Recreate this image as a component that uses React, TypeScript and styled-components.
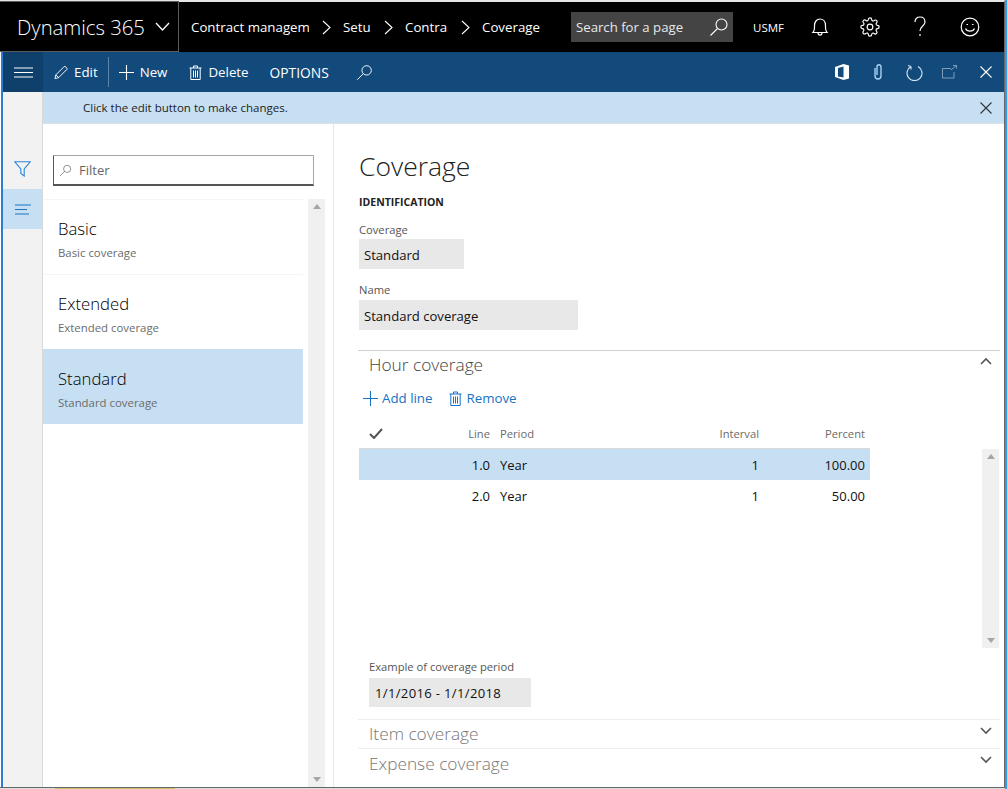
import { ReactNode } from 'react';
import styled, { createGlobalStyle } from 'styled-components';

const GlobalStyle = createGlobalStyle`
  html, body {
    margin: 0;
    padding: 0;
    background: #fff;
    overflow: hidden;
  }
  body {
    font-family: "Open Sans", "Noto Sans", sans-serif;
    color: #000;
  }
  * {
    box-sizing: border-box;
  }
`;

const Page = styled.div`
  width: 1007px;
  height: 789px;
  overflow: hidden;
  background: #3a96e8;
  display: flex;
  flex-direction: column;
`;

const Window = styled.div`
  width: 1005px;
  height: 788px;
  flex: none;
  background: #fff;
  border-top: 2px solid #e6e6e6;
  border-right: 1px solid #666;
  border-bottom: 1px solid #666;
  display: flex;
  flex-direction: column;
`;

const BehindStrip = styled.div`
  height: 1px;
  flex: none;
  width: 1005px;
  background: #dedede;
  padding-left: 55px;
`;

const BehindHighlight = styled.div`
  width: 120px;
  height: 1px;
  background: #c9c46a;
`;

const TopBar = styled.header`
  height: 50px;
  flex: none;
  background: #000;
  color: #fff;
  display: flex;
  align-items: center;
`;

const Brand = styled.div`
  width: 179px;
  height: 51px;
  margin-top: -1px;
  border: 1px solid #5c5c5c;
  border-left: 0;
  display: flex;
  align-items: center;
  padding-left: 17px;
  gap: 10px;
  font-size: 20.3px;
  font-weight: 300;
`;

const Crumbs = styled.nav`
  display: flex;
  align-items: center;
  padding-left: 12px;
  font-size: 13.3px;
  width: 392px;
`;

const Crumb = styled.span<{ $w: number }>`
  width: ${(p) => p.$w}px;
  overflow: hidden;
  white-space: nowrap;
`;

const CrumbSep = styled.span`
  width: 34px;
  display: flex;
  justify-content: center;
`;

const SearchBox = styled.div`
  width: 162px;
  height: 30px;
  background: #444;
  color: #e8e8e8;
  font-size: 13.2px;
  display: flex;
  align-items: center;
  justify-content: space-between;
  padding: 0 4px 0 5px;
`;

const Company = styled.span`
  font-size: 11.5px;
  margin-left: 20px;
  width: 42px;
`;

const TopIcons = styled.div`
  display: flex;
  align-items: center;
`;

const TopIcon = styled.div`
  width: 50px;
  display: flex;
  justify-content: center;
`;

const CommandBar = styled.div`
  height: 40px;
  flex: none;
  margin-left: 1px;
  background: #134a7c;
  color: #fff;
  border-left: 2px solid #2b7cd3;
  display: flex;
  align-items: center;
  font-size: 13.3px;
`;

const MenuButton = styled.div`
  width: 40px;
  height: 40px;
  margin-right: 11px;
  background: #0f3f6b;
  display: flex;
  align-items: center;
  justify-content: center;
`;

const Action = styled.div`
  display: flex;
  align-items: center;
  gap: 6px;
`;

const Divider = styled.div`
  width: 1px;
  height: 30px;
  background: #5f86a8;
  margin: 0 10px;
`;

const ActionGap = styled.span<{ $w: number }>`
  width: ${(p) => p.$w}px;
  flex: none;
`;

const OptionsLabel = styled.span`
  font-size: 13.8px;
`;

const RightActions = styled.div`
  margin-left: auto;
  display: flex;
  align-items: center;
`;

const RightAction = styled.div`
  width: 36px;
  display: flex;
  justify-content: center;
`;

const Body = styled.div`
  flex: 1;
  min-height: 0;
  margin-left: 1px;
  display: flex;
  border-left: 2px solid #2b7cd3;
`;

const Rail = styled.aside`
  width: 40px;
  flex: none;
  background: #f2f2f2;
  border-right: 1px solid #d8d8d8;
  padding-top: 57px;
`;

const RailButton = styled.div<{ $active?: boolean }>`
  height: 40px;
  width: 39px;
  display: flex;
  align-items: center;
  justify-content: center;
  background: ${(p) => (p.$active ? '#c7dff3' : 'transparent')};
`;

const Main = styled.div`
  flex: 1;
  min-width: 0;
  display: flex;
  flex-direction: column;
`;

const MessageBar = styled.div`
  height: 32px;
  flex: none;
  background: #c7dff3;
  border-bottom: 1px solid #d8e2ea;
  display: flex;
  align-items: center;
  justify-content: space-between;
  padding: 0 11px 0 40px;
  font-size: 11.5px;
  color: #222;
`;

const Columns = styled.div`
  flex: 1;
  min-height: 0;
  display: flex;
`;

const ListPane = styled.section`
  width: 291px;
  flex: none;
  border-right: 1px solid #e6e6e6;
  display: flex;
  flex-direction: column;
`;

const FilterBox = styled.div`
  width: 261px;
  height: 31px;
  margin: 31px 0 0 10px;
  border: 1px solid #a6a6a6;
  border-bottom: 2px solid #555;
  border-left: 1px solid #555;
  display: flex;
  align-items: center;
  gap: 7px;
  padding-left: 5px;
  font-size: 13px;
  color: #666;
`;

const ListArea = styled.div`
  flex: 1;
  min-height: 0;
  display: flex;
  margin-top: 13px;
`;

const List = styled.div`
  width: 260px;
  flex: none;
`;

const ListItem = styled.div<{ $selected?: boolean }>`
  height: 75px;
  padding: 17px 0 0 15px;
  background: ${(p) => (p.$selected ? '#c7dff3' : '#fff')};
  border-top: 1px solid ${(p) => (p.$selected ? '#c7dff3' : '#f5f5f5')};
`;

const ItemTitle = styled.div`
  font-size: 16.7px;
  line-height: 24px;
  font-weight: 300;
  color: #000;
`;

const ItemSub = styled.div`
  font-size: 11.4px;
  line-height: 17px;
  margin-top: 3px;
  color: #6b6b6b;
`;

const ScrollTrack = styled.div<{ $left: number }>`
  width: 17px;
  flex: none;
  margin-left: ${(p) => p.$left}px;
  background: #f0f0f0;
  display: flex;
  flex-direction: column;
  justify-content: space-between;
  align-items: center;
  padding: 5px 0;
`;

const ScrollArrow = styled.div<{ $down?: boolean }>`
  width: 0;
  height: 0;
  border-left: 4px solid transparent;
  border-right: 4px solid transparent;
  ${(p) => (p.$down ? 'border-top: 5px solid #a6a6a6;' : 'border-bottom: 5px solid #a6a6a6;')}
`;

const Detail = styled.section`
  flex: 1;
  min-width: 0;
  padding: 22px 4px 0 25px;
`;

const Title = styled.h1`
  margin: 0;
  font-size: 26.5px;
  line-height: 40px;
  font-weight: 300;
  color: #222;
`;

const GroupTitle = styled.h2`
  margin: 9px 0 0;
  font-size: 10.5px;
  line-height: 14px;
  font-weight: 700;
  color: #222;
`;

const FieldLabel = styled.div<{ $top: number }>`
  margin-top: ${(p) => p.$top}px;
  font-size: 11.2px;
  line-height: 15px;
  color: #555;
`;

const FieldValue = styled.div<{ $w: number; $gap?: number; $short?: boolean }>`
  width: ${(p) => p.$w}px;
  height: ${(p) => (p.$short ? 29 : 30)}px;
  margin-top: ${(p) => p.$gap ?? 2}px;
  background: #e8e8e8;
  font-size: 13.1px;
  display: flex;
  align-items: center;
  padding: 1px 0 0 5px;
  color: #111;
`;

const DateValue = styled(FieldValue)`
  padding-left: 6px;
  letter-spacing: 0.32px;
`;

const NameField = styled.div`
  margin-bottom: 20px;
`;

const Section = styled.div<{ $strong?: boolean; $h: number }>`
  height: ${(p) => p.$h}px;
  margin-left: -1px;
  border-top: 1px solid ${(p) => (p.$strong ? '#d0d0d0' : '#eeeeee')};
  padding: 0 8px ${(p) => (p.$strong ? 3 : 1)}px 11px;
  display: flex;
  align-items: center;
  justify-content: space-between;
  font-size: 17.3px;
  font-weight: 300;
  color: ${(p) => (p.$strong ? '#444' : '#777')};
`;

const SectionChevron = styled.div<{ $up?: boolean }>`
  margin-bottom: ${(p) => (p.$up ? 8 : 6)}px;
`;

const ToolRow = styled.div`
  height: 34px;
  display: flex;
  align-items: center;
  padding-left: 4px;
  gap: 4px;
  color: #1673c6;
  font-size: 13.3px;
`;

const ToolGap = styled.span`
  width: 9px;
`;

const GridHeader = styled.div`
  height: 32px;
  margin-top: 2px;
  width: 511px;
  display: grid;
  grid-template-columns: 121px 10px 1fr 80px 106px;
  align-items: center;
  font-size: 11.2px;
  color: #6b6b6b;
  padding: 2px 5px 0 10px;
  border-bottom: 1px solid #dcdcdc;
`;

const CheckCell = styled.div`
  display: flex;
  justify-content: space-between;
  align-items: center;
`;

const GridArea = styled.div`
  display: flex;
  height: 199px;
`;

const GridRows = styled.div`
  width: 511px;
  flex: none;
`;

const GridRow = styled.div<{ $selected?: boolean }>`
  height: 31px;
  display: grid;
  grid-template-columns: 121px 10px 1fr 80px 106px;
  align-items: center;
  font-size: 13px;
  color: #111;
  padding: 0 5px 0 10px;
  background: ${(p) => (p.$selected ? '#c7dff3' : '#fff')};
`;

const Num = styled.span`
  text-align: right;
`;

const Example = styled.div`
  padding: 11px 0 0 10px;
  height: 71px;
`;

const Ico = ({ w = 18, h = 18, box, color = 'currentColor', sw = 1, children }: { w?: number; h?: number; box?: string; color?: string; sw?: number; children: ReactNode }) => (
  <svg width={w} height={h} viewBox={box ?? `0 0 ${w} ${h}`} fill="none" stroke={color} strokeWidth={sw} style={{ flex: 'none', display: 'block' }}>
    {children}
  </svg>
);

const Magnifier = ({ size = 20, color = 'currentColor' }: { size?: number; color?: string }) => (
  <Ico w={size} h={size} box="0 0 20 20" color={color} sw={1.1}>
    <circle cx="12.5" cy="7.5" r="5.5" />
    <path d="M8.5 11.5L1.5 18.5" />
  </Ico>
);

const Chevron = ({ up, color = '#555' }: { up?: boolean; color?: string }) => (
  <Ico w={12} h={8} color={color} sw={1.6}>
    <path d={up ? 'M1 7L6 2L11 7' : 'M1 1L6 6L11 1'} />
  </Ico>
);

const Crossed = ({ size = 14, color = 'currentColor' }: { size?: number; color?: string }) => (
  <Ico w={size} h={size} box="0 0 14 14" color={color} sw={1.1}>
    <path d="M1.5 1.5L12.5 12.5M12.5 1.5L1.5 12.5" />
  </Ico>
);

const Plus = ({ color = 'currentColor' }: { color?: string }) => (
  <Ico w={15} h={15} color={color} sw={1.1}>
    <path d="M7.5 0V15M0 7.5H15" />
  </Ico>
);

const Trash = ({ color = 'currentColor' }: { color?: string }) => (
  <Ico w={13} h={15} color={color} sw={1}>
    <path d="M0.5 3H12.5M4.5 3V1H8.5V3M1.8 3V14.5H11.2V3M4.5 5.5V12.5M6.5 5.5V12.5M8.5 5.5V12.5" />
  </Ico>
);

const Sep = () => (
  <CrumbSep>
    <Ico w={9} h={15} color="#fff" sw={1.1}>
      <path d="M1 1L8 7.5L1 14" />
    </Ico>
  </CrumbSep>
);

function App() {
  return (
    <Page>
      <GlobalStyle />
      <Window>
        <TopBar>
          <Brand>
            Dynamics 365
            <Ico w={15} h={9} color="#fff" sw={1.3}>
              <path d="M1 1L7.5 8L14 1" />
            </Ico>
          </Brand>
          <Crumbs>
            <Crumb $w={118}>Contract managem</Crumb>
            <Sep />
            <Crumb $w={28}>Setu</Crumb>
            <Sep />
            <Crumb $w={43}>Contra</Crumb>
            <Sep />
            <Crumb $w={62}>Coverage</Crumb>
          </Crumbs>
          <SearchBox>
            Search for a page
            <Magnifier color="#fff" />
          </SearchBox>
          <Company>USMF</Company>
          <TopIcons>
            <TopIcon>
              <Ico w={18} h={20} color="#fff" sw={1.2}>
                <path d="M2 15.5C4 13.5 3.5 11 3.5 8.5C3.5 4.5 6 2 9 2C12 2 14.5 4.5 14.5 8.5C14.5 11 14 13.5 16 15.5ZM7 15.5C7 19 11 19 11 15.5" />
              </Ico>
            </TopIcon>
            <TopIcon>
              <Ico w={20} h={20} box="0 0 24 24" color="#fff" sw={1.4}>
                <circle cx="12" cy="12" r="3.4" />
                <path d="M19.4 15a1.7 1.7 0 0 0 .3 1.8l.1.1a2 2 0 1 1-2.9 2.9l-.1-.1a1.7 1.7 0 0 0-2.8 1.2V21a2 2 0 0 1-4 0v-.1a1.7 1.7 0 0 0-2.9-1.2l-.1.1a2 2 0 1 1-2.9-2.9l.1-.1a1.7 1.7 0 0 0-1.2-2.8H3a2 2 0 0 1 0-4h.1a1.7 1.7 0 0 0 1.2-2.9l-.1-.1a2 2 0 1 1 2.9-2.9l.1.1a1.7 1.7 0 0 0 1.8.3H9a1.7 1.7 0 0 0 1-1.5V3a2 2 0 0 1 4 0v.1a1.7 1.7 0 0 0 2.9 1.2l.1-.1a2 2 0 1 1 2.9 2.9l-.1.1a1.7 1.7 0 0 0-.3 1.8V9a1.7 1.7 0 0 0 1.5 1H21a2 2 0 0 1 0 4h-.1a1.7 1.7 0 0 0-1.5 1z" />
              </Ico>
            </TopIcon>
            <TopIcon>
              <Ico w={14} h={22} color="#fff" sw={1.2}>
                <path d="M2 6C2 3 4 1 7 1C10 1 12 3 12 6C12 10 7 10 7 15M7 18V20" />
              </Ico>
            </TopIcon>
            <TopIcon>
              <Ico w={20} h={20} color="#fff" sw={1.2}>
                <circle cx="10" cy="10" r="8.8" />
                <path d="M5.5 11.5C7 15 13 15 14.5 11.5M6.5 7.5H8M12 7.5H13.5" />
              </Ico>
            </TopIcon>
          </TopIcons>
        </TopBar>
        <CommandBar>
          <MenuButton>
            <Ico w={19} h={11} color="#fff" sw={1.2}>
              <path d="M0 1H19M0 5.5H19M0 10H19" />
            </Ico>
          </MenuButton>
          <Action>
            <Ico w={14} h={15} box="0 0 15 15" color="#fff" sw={1}>
              <path d="M1 14L2 10L11 1C12 0.5 14.5 3 14 4L5 13ZM2 10L5 13" />
            </Ico>
            Edit
          </Action>
          <Divider />
          <Action>
            <Plus color="#fff" />
            New
          </Action>
          <ActionGap $w={22} />
          <Action>
            <Trash color="#fff" />
            Delete
          </Action>
          <ActionGap $w={21} />
          <OptionsLabel>OPTIONS</OptionsLabel>
          <ActionGap $w={27} />
          <Magnifier size={17} color="#fff" />
          <RightActions>
            <RightAction>
              <Ico w={14} h={16} color="#fff" sw={0}>
                <path fill="#fff" d="M0 3L8.5 0L14 1.5V14.5L8.5 16L0 13ZM8.5 2.5L3 4V12.5L8.5 13.5Z" />
              </Ico>
            </RightAction>
            <RightAction>
              <Ico w={10} h={16} color="#a9d3f2" sw={1.4}>
                <path d="M2 4V12C2 16 8 16 8 12V3C8 0 4 0 4 3V11" />
              </Ico>
            </RightAction>
            <RightAction>
              <Ico w={17} h={17} color="#d8e6f2" sw={1.1}>
                <path d="M5 2.5A7.5 7.5 0 1 0 12 2.5M5 2.5L2 1.5M5 2.5L5 5.5" />
              </Ico>
            </RightAction>
            <RightAction>
              <Ico w={16} h={14} color="#7f9db8" sw={1}>
                <path d="M9 3.5H0.5V13H12V7M9 5L14.5 0.5M11 0.5H14.5V3.5" />
              </Ico>
            </RightAction>
            <RightAction>
              <Crossed color="#fff" />
            </RightAction>
          </RightActions>
        </CommandBar>
        <Body>
          <Rail>
            <RailButton>
              <Ico w={17} h={16} color="#2b88d8" sw={1.1}>
                <path d="M0.8 0.8H16.2L10.2 8V15L6.8 12.5V8Z" />
              </Ico>
            </RailButton>
            <RailButton $active>
              <Ico w={16} h={11} color="#1673c6" sw={1}>
                <path d="M0 1H16M0 5.5H12M0 10H14" />
              </Ico>
            </RailButton>
          </Rail>
          <Main>
            <MessageBar>
              Click the edit button to make changes.
              <Crossed color="#333" />
            </MessageBar>
            <Columns>
              <ListPane>
                <FilterBox>
                  <Magnifier size={13} color="#666" />
                  Filter
                </FilterBox>
                <ListArea>
                  <List>
                    <ListItem>
                      <ItemTitle>Basic</ItemTitle>
                      <ItemSub>Basic coverage</ItemSub>
                    </ListItem>
                    <ListItem>
                      <ItemTitle>Extended</ItemTitle>
                      <ItemSub>Extended coverage</ItemSub>
                    </ListItem>
                    <ListItem $selected>
                      <ItemTitle>Standard</ItemTitle>
                      <ItemSub>Standard coverage</ItemSub>
                    </ListItem>
                  </List>
                  <ScrollTrack $left={5}>
                    <ScrollArrow />
                    <ScrollArrow $down />
                  </ScrollTrack>
                </ListArea>
              </ListPane>
              <Detail>
                <Title>Coverage</Title>
                <GroupTitle>IDENTIFICATION</GroupTitle>
                <FieldLabel $top={13}>Coverage</FieldLabel>
                <FieldValue $w={105}>Standard</FieldValue>
                <NameField>
                  <FieldLabel $top={13}>Name</FieldLabel>
                  <FieldValue $w={219} $gap={3}>Standard coverage</FieldValue>
                </NameField>
                <Section $strong $h={31}>
                  Hour coverage
                  <SectionChevron $up>
                    <Chevron up />
                  </SectionChevron>
                </Section>
                <ToolRow>
                  <Plus />
                  Add line
                  <ToolGap />
                  <Trash />
                  Remove
                </ToolRow>
                <GridHeader>
                  <CheckCell>
                    <Ico w={14} h={11} color="#555" sw={2}>
                      <path d="M1 6L5 10L13 1" />
                    </Ico>
                    <span>Line</span>
                  </CheckCell>
                  <span />
                  <span>Period</span>
                  <Num>Interval</Num>
                  <Num>Percent</Num>
                </GridHeader>
                <GridArea>
                  <GridRows>
                    <GridRow $selected>
                      <Num>1.0</Num>
                      <span />
                      <span>Year</span>
                      <Num>1</Num>
                      <Num>100.00</Num>
                    </GridRow>
                    <GridRow>
                      <Num>2.0</Num>
                      <span />
                      <span>Year</span>
                      <Num>1</Num>
                      <Num>50.00</Num>
                    </GridRow>
                  </GridRows>
                  <ScrollTrack $left={112}>
                    <ScrollArrow />
                    <ScrollArrow $down />
                  </ScrollTrack>
                </GridArea>
                <Example>
                  <FieldLabel $top={0}>Example of coverage period</FieldLabel>
                  <DateValue $w={162} $gap={4} $short>1/1/2016 - 1/1/2018</DateValue>
                </Example>
                <Section $h={29}>
                  Item coverage
                  <SectionChevron>
                    <Chevron />
                  </SectionChevron>
                </Section>
                <Section $h={30}>
                  Expense coverage
                  <SectionChevron>
                    <Chevron />
                  </SectionChevron>
                </Section>
              </Detail>
            </Columns>
          </Main>
        </Body>
      </Window>
      <BehindStrip>
        <BehindHighlight />
      </BehindStrip>
    </Page>
  );
}

export default App;
